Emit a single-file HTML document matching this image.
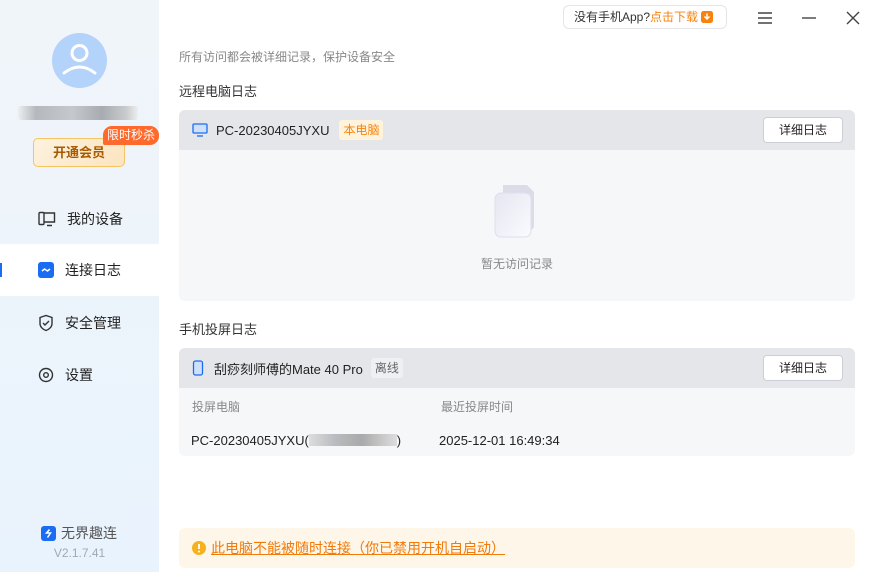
<!DOCTYPE html>
<html><head><meta charset="utf-8"><style>
*{box-sizing:border-box;margin:0;padding:0}
body{width:871px;height:572px;overflow:hidden;font-family:"Liberation Sans","Noto Sans CJK SC",sans-serif;background:#fff;position:relative;color:#222}
.side{position:absolute;left:0;top:0;width:159px;height:572px;background:linear-gradient(#f0f5f9,#e9f3fd)}
.avatar{position:absolute;left:52px;top:33px;width:55px;height:55px;border-radius:50%;background:#b3d3fb}
.blur{position:absolute;left:18px;top:106px;width:120px;height:14px;background:linear-gradient(90deg,#eceef0,#b5b9bd 15%,#c5c9cd 45%,#a8acb0 70%,#c8cbce 90%,#eceef0);border-radius:3px}
.vip{position:absolute;left:33px;top:138px;width:92px;height:29px;border:1px solid #f5c560;border-radius:5px;background:linear-gradient(135deg,#fdf2df,#fbe4c0);color:#a85a00;font-size:13px;font-weight:bold;text-align:center;line-height:27px}
.tag{position:absolute;left:103px;top:126px;background:#ff6a2c;color:#fff;font-size:12px;padding:0 4px;height:19px;line-height:19px;border-radius:9px 9px 9px 2px}
.nav{position:absolute;left:0;width:159px;height:52px;display:flex;align-items:center;padding-left:38px;font-size:14px;color:#222}
.nav svg{margin-right:11px}
.nav.on{background:#fff}
.nav.on:before{content:"";position:absolute;left:0;top:19px;width:2px;height:14px;background:#1a6df2}
.brand{position:absolute;left:41px;top:523px;font-size:14px;color:#555;display:flex;align-items:center}
.ver{position:absolute;left:0;width:159px;text-align:center;top:546px;font-size:12px;color:#a0a8b4}
.top{position:absolute;left:563px;top:5px;width:164px;height:24px;border:1px solid #e3e5e8;border-radius:6px;font-size:12px;color:#333;line-height:22px;padding-left:10px}
.top b{font-weight:normal;color:#f7830e}
.card{position:absolute;left:179px;width:676px;border-radius:6px;background:#f6f7f9;overflow:hidden}
.hd{height:40px;background:#e5e6ea;display:flex;align-items:center;padding-left:13px;font-size:13px;color:#222}
.btn{position:absolute;right:12px;top:7px;width:80px;height:26px;background:#fff;border:1px solid #ccd0d6;border-radius:4px;font-size:12px;text-align:center;line-height:24px;color:#222}
.lbl{display:inline-block;font-size:12px;padding:0 4px;height:20px;line-height:20px;border-radius:3px;margin-left:10px}
h3{position:absolute;left:179px;font-size:13px;font-weight:normal;color:#333}
.warn{position:absolute;left:179px;top:528px;width:676px;height:40px;background:#fef6e8;border-radius:6px;display:flex;align-items:center;padding-left:13px;font-size:14px;color:#f07a0a}
</style></head><body>
<div class="side">
 <div class="avatar"><svg width="55" height="55" viewBox="0 0 55 55"><circle cx="27.5" cy="20" r="7.5" fill="none" stroke="#fff" stroke-width="3"/><path d="M12 40 Q27.5 28 43 40" fill="none" stroke="#fff" stroke-width="3" stroke-linecap="round"/></svg></div>
 <div class="blur"></div>
 <div class="vip">开通会员</div>
 <div class="tag">限时秒杀</div>
 <div class="nav" style="top:193px"><svg width="18" height="16" viewBox="0 0 18 16"><rect x="1" y="1.5" width="5" height="12" rx="1" fill="none" stroke="#333" stroke-width="1.4"/><path d="M6 2h10.5v9H6M9 14.5h5" fill="none" stroke="#333" stroke-width="1.4"/></svg>我的设备</div>
 <div class="nav on" style="top:244px"><svg width="16" height="16" viewBox="0 0 16 16"><rect width="16" height="16" rx="3" fill="#1a6df2"/><path d="M4 9l2.5-2 3 2L12 7" fill="none" stroke="#fff" stroke-width="1.5"/></svg>连接日志</div>
 <div class="nav" style="top:297px"><svg width="16" height="18" viewBox="0 0 16 18"><path d="M2 3.5L8 1.5l6 2v6c0 3.5-3 6-6 7-3-1-6-3.5-6-7z" fill="none" stroke="#333" stroke-width="1.4"/><path d="M5 9l2 2 4-4" fill="none" stroke="#333" stroke-width="1.4"/></svg>安全管理</div>
 <div class="nav" style="top:349px"><svg width="16" height="16" viewBox="0 0 16 16"><circle cx="8" cy="8" r="6.5" fill="none" stroke="#333" stroke-width="1.4"/><circle cx="8" cy="8" r="2.3" fill="none" stroke="#333" stroke-width="1.4"/></svg>设置</div>
 <div class="brand"><svg width="15" height="15" viewBox="0 0 15 15" style="margin-right:5px"><rect width="15" height="15" rx="3" fill="#1a6df2"/><path d="M8.5 3.5L5.5 7h4l-3 4.5" fill="none" stroke="#fff" stroke-width="1.5"/></svg>无界趣连</div>
 <div class="ver">V2.1.7.41</div>
</div>
<div class="top">没有手机App?<b>点击下载</b> <svg width="12" height="12" viewBox="0 0 12 12" style="vertical-align:-2px"><rect width="12" height="12" rx="2.5" fill="#f7830e"/><path d="M6 2.5v5M3.5 5.5L6 8l2.5-2.5" fill="none" stroke="#fff" stroke-width="1.5"/></svg></div>
<svg style="position:absolute;left:757px;top:11px" width="16" height="14"><path d="M1 2h14M1 7h14M1 12h14" stroke="#444" stroke-width="1.4"/></svg>
<svg style="position:absolute;left:801px;top:11px" width="16" height="14"><path d="M1 7h14" stroke="#444" stroke-width="1.4"/></svg>
<svg style="position:absolute;left:846px;top:11px" width="14" height="14"><path d="M1 1l12 12M13 1L1 13" stroke="#444" stroke-width="1.4"/></svg>
<div style="position:absolute;left:179px;top:48px;font-size:12px;color:#888">所有访问都会被详细记录，保护设备安全</div>
<h3 style="top:81px">远程电脑日志</h3>
<div class="card" style="top:110px;height:191px">
 <div class="hd"><svg width="16" height="14" viewBox="0 0 16 14" style="margin-right:8px"><rect x="1" y="1" width="14" height="9" rx="1" fill="#cfe0fb" stroke="#1a6df2" stroke-width="1.3"/><path d="M5 13h6" stroke="#1a6df2" stroke-width="1.3"/></svg>PC-20230405JYXU<span class="lbl" style="background:#fff3dc;color:#f7830e">本电脑</span><div class="btn">详细日志</div></div>
 <svg style="position:absolute;left:314px;top:73px" width="50" height="56" viewBox="0 0 50 56"><defs><linearGradient id="g" x1="0" y1="0" x2="1" y2="1"><stop offset="0" stop-color="#e6e6f2"/><stop offset="1" stop-color="#fafafe"/></linearGradient></defs><path d="M10 2h24l7 7v34a4 4 0 01-4 4H10z" fill="#dcdce8"/><rect x="2" y="10" width="36" height="44" rx="6" fill="url(#g)" stroke="#dedef0"/></svg>
 <div style="position:absolute;left:0;width:676px;text-align:center;top:145px;font-size:12px;color:#888">暂无访问记录</div>
</div>
<h3 style="top:319px">手机投屏日志</h3>
<div class="card" style="top:348px;height:108px">
 <div class="hd"><svg width="12" height="16" viewBox="0 0 12 16" style="margin-right:10px"><rect x="1.5" y="1" width="9" height="14" rx="2" fill="#cfe0fb" stroke="#1a6df2" stroke-width="1.3"/></svg>刮痧刻师傅的Mate 40 Pro<span class="lbl" style="background:#eef0f3;color:#666;margin-left:8px">离线</span><div class="btn">详细日志</div></div>
 <div style="position:absolute;left:13px;top:50px;font-size:12px;color:#888">投屏电脑</div>
 <div style="position:absolute;left:262px;top:50px;font-size:12px;color:#888">最近投屏时间</div>
 <div style="position:absolute;left:12px;top:85px;font-size:13px;color:#222">PC-20230405JYXU(<span style="display:inline-block;width:88px;height:12px;vertical-align:-1px;background:linear-gradient(90deg,#ddd,#b8bbbf 30%,#aaa 60%,#ddd)"></span>)</div>
 <div style="position:absolute;left:260px;top:85px;font-size:13px;color:#222">2025-12-01 16:49:34</div>
</div>
<div class="warn"><svg width="14" height="14" viewBox="0 0 14 14" style="margin-right:5px"><circle cx="7" cy="7" r="7" fill="#f5b21e"/><path d="M7 3v5" stroke="#fff" stroke-width="1.8"/><circle cx="7" cy="10.5" r="1" fill="#fff"/></svg><span style="text-decoration:underline">此电脑不能被随时连接（你已禁用开机自启动）</span></div>
</body></html>
